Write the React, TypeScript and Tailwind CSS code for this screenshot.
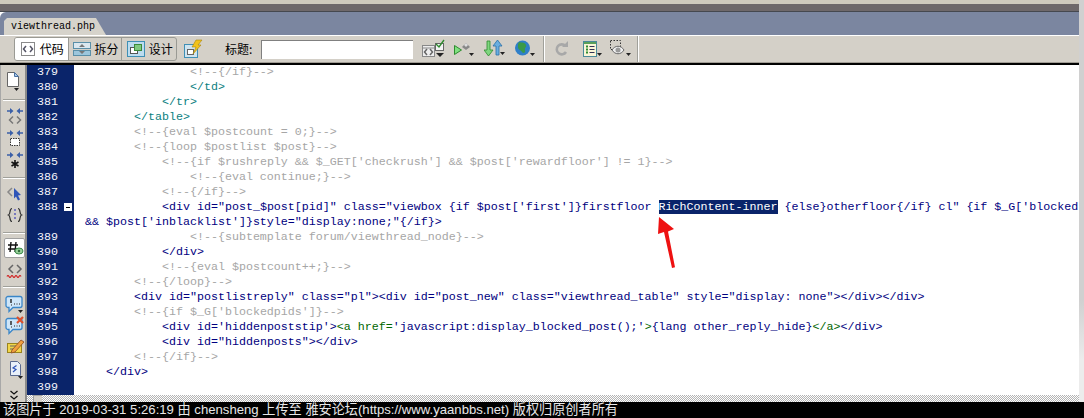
import React from 'react'

type Seg = [string, string?]

const NAVY = 'text-[#000080]'
const GRAY = 'text-[#a6a6a6]'
const TEAL = 'text-[#0a8080]'
const GREEN = 'text-[#006600]'

const lines: { num?: string; indent: number; segs: Seg[] }[] = [
    { num: '379', indent: 16, segs: [['<!--{/if}-->', GRAY]] },
    { num: '380', indent: 16, segs: [['</td>', TEAL]] },
    { num: '381', indent: 12, segs: [['</tr>', TEAL]] },
    { num: '382', indent: 8, segs: [['</table>', TEAL]] },
    { num: '383', indent: 8, segs: [['<!--{eval $postcount = 0;}-->', GRAY]] },
    { num: '384', indent: 8, segs: [['<!--{loop $postlist $post}-->', GRAY]] },
    { num: '385', indent: 12, segs: [["<!--{if $rushreply && $_GET['checkrush'] && $post['rewardfloor'] != 1}-->", GRAY]] },
    { num: '386', indent: 16, segs: [['<!--{eval continue;}-->', GRAY]] },
    { num: '387', indent: 12, segs: [['<!--{/if}-->', GRAY]] },
    {
        num: '388',
        indent: 12,
        segs: [
            ['<div id="post_$post[pid]" class="viewbox {if $post[\'first\']}firstfloor ', NAVY],
            ['RichContent-inner', 'bg-[#0a246a] text-white'],
            [" {else}otherfloor{/if} cl\" {if $_G['blocked", NAVY],
        ],
    },
    { indent: 1, segs: [["&& $post['inblacklist']}style=\"display:none;\"{/if}>", NAVY]] },
    { num: '389', indent: 16, segs: [['<!--{subtemplate forum/viewthread_node}-->', GRAY]] },
    { num: '390', indent: 12, segs: [['</div>', NAVY]] },
    { num: '391', indent: 12, segs: [['<!--{eval $postcount++;}-->', GRAY]] },
    { num: '392', indent: 8, segs: [['<!--{/loop}-->', GRAY]] },
    {
        num: '393',
        indent: 8,
        segs: [['<div id="postlistreply" class="pl"><div id="post_new" class="viewthread_table" style="display: none"></div></div>', NAVY]],
    },
    { num: '394', indent: 8, segs: [["<!--{if $_G['blockedpids']}-->", GRAY]] },
    {
        num: '395',
        indent: 12,
        segs: [
            ["<div id='hiddenpoststip'>", NAVY],
            ['<a href=', GREEN],
            ["'javascript:display_blocked_post();'", NAVY],
            ['>', GREEN],
            ['{lang other_reply_hide}', NAVY],
            ['</a>', GREEN],
            ['</div>', NAVY],
        ],
    },
    { num: '396', indent: 12, segs: [['<div id="hiddenposts"></div>', NAVY]] },
    { num: '397', indent: 8, segs: [['<!--{/if}-->', GRAY]] },
    { num: '398', indent: 4, segs: [['</div>', NAVY]] },
    { num: '399', indent: 0, segs: [] },
]

const Svg = ({ w = 18, h = 18, children }: { w?: number; h?: number; children: React.ReactNode }) => (
    <svg width={w} height={h} viewBox={`0 0 ${w} ${h}`} className="block shrink-0">
        {children}
    </svg>
)

const Caret = ({ x, y }: { x: number; y: number }) => <path d={`M${x} ${y}h5l-2.5 3z`} fill="#222" />

const CodeIcon = () => (
    <Svg>
        <rect x="2.5" y="2.5" width="13" height="13" fill="#fff" stroke="#8a8a8a" />
        <path d="M7 6 4.5 9 7 12M11 6l2.5 3L11 12" fill="none" stroke="#556" strokeWidth="1.5" />
    </Svg>
)

const SplitIcon = () => (
    <Svg w={20}>
        <rect x="1.5" y="2.5" width="17" height="6" fill="#dbe7ef" stroke="#5a8fa8" />
        <rect x="1.5" y="10.5" width="17" height="5" fill="#9cc6dc" stroke="#5a8fa8" />
        <path d="M7 7 10 4l3 3zM7 11l3 3 3-3z" fill="#777" />
    </Svg>
)

const DesignIcon = () => (
    <Svg w={20}>
        <rect x="1.5" y="1.5" width="17" height="15" fill="#bcdcef" stroke="#3f8fb5" />
        <rect x="4.5" y="7.5" width="7" height="6" fill="#fff" stroke="#555" />
        <rect x="8.5" y="4.5" width="7" height="6" fill="#7fc97f" stroke="#3a8a3a" />
    </Svg>
)

const FlashIcon = () => (
    <Svg w={20} h={20}>
        <rect x="1.5" y="5.5" width="13" height="13" fill="#cfe4f0" stroke="#3f8fb5" />
        <rect x="4.5" y="10.5" width="6" height="5" fill="#fff" stroke="#666" />
        <path d="M13 1h6l-4 5h3l-8 9 3-7H9z" fill="#f2c21a" stroke="#a8840c" strokeWidth=".6" />
    </Svg>
)

const ValidateIcon = () => (
    <Svg w={25} h={20}>
        <rect x="1.5" y="6.5" width="12" height="11" fill="#eee" stroke="#888" />
        <path d="M2 9h11" stroke="#888" />
        <path d="M6 10 3.5 13 6 16M9 10l2.5 3L9 16" fill="none" stroke="#666" strokeWidth="1.5" />
        <rect x="14.5" y="4.5" width="8" height="7" fill="#f4f4f4" stroke="#666" />
        <path d="m15 5 3 3 5-7" fill="none" stroke="#2e8b2e" strokeWidth="1.4" />
        <path d="M15 14h8l-4 4z" fill="#222" />
    </Svg>
)

const DebugIcon = () => (
    <Svg w={23} h={20}>
        <path d="M1.5 6.5v9l7-4.5z" fill="#7fe07f" stroke="#2e8b2e" />
        <path d="m9 8 4-4 4 4-4 3z" fill="#888" />
        <path d="m11 6 2-2 2 2-2 2z" fill="#ddd" />
        <Caret x={16} y={14} />
    </Svg>
)

const ArrowsIcon = () => (
    <Svg w={21} h={20}>
        <path d="M3 2h3v9h3l-4.5 6L0 11h3z" fill="#7fd67f" stroke="#2e8b2e" strokeWidth=".8" />
        <path d="M12 16V7H9l4.5-6L18 7h-3v9z" fill="#6aaee0" stroke="#2a6ea8" strokeWidth=".8" />
        <Caret x={16} y={13} />
    </Svg>
)

const GlobeIcon = () => (
    <Svg w={23} h={20}>
        <circle cx="8.5" cy="9" r="7.5" fill="#2f7fc8" />
        <path d="M5 3c3 1 6 0 7 3s-2 2-1 5-2 4-3 2-4-2-4-5 0-3 1-5z" fill="#3a9a4a" />
        <Caret x={16} y={14} />
    </Svg>
)

const RefreshIcon = () => (
    <Svg w={15} h={16}>
        <path d="M11.5 5A5 5 0 1 0 12 11" fill="none" stroke="#a8a8a8" strokeWidth="2.6" />
        <path d="M8 6h6V0z" fill="#a8a8a8" />
    </Svg>
)

const ListIcon = () => (
    <Svg w={20} h={20}>
        <rect x="1.5" y="2.5" width="13" height="15" fill="#fbf6d8" stroke="#4a8a9a" />
        <path d="M2 4h12" stroke="#5aa05a" strokeWidth="2" />
        <path d="M4 7.5h2M4 10.5h2M4 13.5h2" stroke="#2e8b2e" strokeWidth="2" />
        <path d="M7.5 7.5h5M7.5 10.5h5M7.5 13.5h5" stroke="#335" />
        <Caret x={15} y={14} />
    </Svg>
)

const EyeIcon = () => (
    <Svg w={24} h={20}>
        <rect x="1.5" y="1.5" width="10" height="9" fill="none" stroke="#333" strokeDasharray="1.5 1.5" />
        <path d="M3 11c3-5 9-5 12 0-3 5-9 5-12 0z" fill="#eee" stroke="#666" />
        <circle cx="9" cy="11" r="2.5" fill="#999" />
        <Caret x={17} y={14} />
    </Svg>
)

const SideDoc = () => (
    <Svg w={16} h={20}>
        <path d="M1.5 1.5h7l4 4v10h-11z" fill="#fff" stroke="#666" />
        <path d="M8.5 1.5v4h4z" fill="#a8c8e8" stroke="#4a70a0" />
        <Caret x={8} y={17} />
    </Svg>
)

const Collapse = ({ kind }: { kind: 'code' | 'box' | 'star' }) => (
    <Svg w={18} h={20}>
        <path d="M1 5h5M17 5h-5" stroke="#3a5fa8" strokeWidth="1.4" />
        <path d="m4 2 3.5 3L4 8zM14 2l-3.5 3L14 8z" fill="#3a5fa8" />
        {kind === 'code' && <path d="M7 10.5 3.5 14 7 17.5M11 10.5l3.5 3.5L11 17.5" fill="none" stroke="#777" strokeWidth="1.5" />}
        {kind === 'box' && <rect x="4.5" y="10.5" width="9" height="7" fill="#fff" stroke="#333" strokeDasharray="1.5 1" />}
        {kind === 'star' && <path d="M9 10v8M5.5 12l7 4M12.5 12l-7 4" stroke="#111" strokeWidth="1.6" />}
    </Svg>
)

const SelectTag = () => (
    <Svg>
        <path d="M6 4 2 8l4 4" fill="none" stroke="#888" strokeWidth="1.5" />
        <path d="m8 4 7 7-3 .5 2 4-2 1-2-4-2 2z" fill="#2f55b8" />
    </Svg>
)

const Braces = () => (
    <Svg>
        <path d="M6 2.5C3 2.5 5 8 2.5 9 5 10 3 15.5 6 15.5M12 2.5c3 0 1 5.5 3.5 6.5-2.5 1-.5 6.5-3.5 6.5" fill="none" stroke="#333" strokeWidth="1.2" />
        <path d="M9 3v12" stroke="#4a4ab8" strokeDasharray="2 2" strokeWidth="1.3" />
    </Svg>
)

const HashIcon = () => (
    <Svg>
        <path d="M5 3 4 13M10 3 9 13M2 6h10M2 10h10" stroke="#111" strokeWidth="1.4" />
        <ellipse cx="13" cy="12" rx="4" ry="3" fill="#9ad09a" stroke="#3a8a4a" />
        <circle cx="13" cy="12" r="1.2" fill="#2e6a3a" />
    </Svg>
)

const RedTag = () => (
    <Svg>
        <path d="M7 2 3 6l4 4M11 2l4 4-4 4" fill="none" stroke="#666" strokeWidth="1.5" />
        <path d="M1 13.5q1-2 2 0t2 0 2 0 2 0 2 0 2 0 2 0" fill="none" stroke="#d02020" strokeWidth="1.2" />
    </Svg>
)

const Balloon = ({ cross }: { cross?: boolean }) => (
    <Svg w={20} h={20}>
        <path d="M3 2.5h12a2 2 0 0 1 2 2v7a2 2 0 0 1-2 2H8l-4 4v-4H3a2 2 0 0 1-2-2v-7a2 2 0 0 1 2-2z" fill="#cfe6f8" stroke="#3a86c8" strokeWidth="1.3" />
        <path d="M6 5v4" stroke="#222" strokeWidth="1.4" />
        <path d="M9 10h1M11.5 10h1M14 10h1M6 11h1" stroke="#222" />
        {cross ? <path d="m12 1 6 6M18 1l-6 6" stroke="#e0502a" strokeWidth="2.2" /> : <Caret x={13} y={16} />}
    </Svg>
)

const Pencil = () => (
    <Svg w={20} h={18}>
        <rect x="1.5" y="6.5" width="14" height="9" fill="#f2d64a" stroke="#9a8420" />
        <path d="M4 9h6M4 12h4" stroke="#666" />
        <path d="m6 13 9-10 3 2-9 10-4 1z" fill="#f0a040" stroke="#8a4a20" strokeWidth=".8" />
    </Svg>
)

const ScriptDoc = () => (
    <Svg w={18} h={20}>
        <path d="M2.5 1.5h7l3 3v11h-10z" fill="#e8f0fa" stroke="#5a6a90" />
        <path d="M8.5 5.5 5 8l3 1.5L5 12" fill="none" stroke="#2f55b8" strokeWidth="1.2" />
        <Caret x={10} y={16} />
    </Svg>
)

const Chevrons = () => (
    <Svg w={10} h={10}>
        <path d="m1.5 1 3.5 3 3.5-3M1.5 6 5 9l3.5-3" fill="none" stroke="#111" strokeWidth="1.3" />
    </Svg>
)

const Sep = () => <div className="mx-auto h-px w-[22px] bg-[#a0a09a] shadow-[0_1px_0_#fff]" />

const ModeButton = ({ active, label, children }: { active?: boolean; label: string; children: React.ReactNode }) => (
    <div
        className={`flex h-full w-[54px] items-center justify-center gap-[3px] border-r border-[#9a9a94] last:border-r-0 ${
            active ? 'bg-white' : ''
        }`}
    >
        {children}
        <span className="text-[12px] text-black">{label}</span>
    </div>
)

export default function App() {
    return (
        <div className="flex h-[418px] w-[1084px] flex-col overflow-hidden bg-white font-['Noto_Sans_CJK_SC',sans-serif]">
            <div className="flex min-h-0 flex-1">
                <div className="flex w-[1079px] shrink-0 flex-col">
                    {/* window chrome */}
                    <div className="h-[4px] shrink-0 bg-[#cfcabd]" />
                    <div className="h-[7px] shrink-0 bg-[#6e686a]" />
                    <div className="h-px shrink-0 bg-[#45484f]" />
                    <div className="flex h-[23px] shrink-0 items-end rounded-tl-[6px] bg-[#7b86a0] pl-[4px]">
                        <div className="flex h-[17px] w-[102px] items-center bg-[#d6d3cb] pl-[7px] font-['Liberation_Mono',monospace] text-[10px] text-black [clip-path:polygon(0_100%,0_3px,3px_0,92px_0,100%_100%)]">
                            viewthread.php
                        </div>
                    </div>

                    {/* top toolbar */}
                    <div className="flex h-[27px] shrink-0 items-center border-t border-white bg-[#d4d0c8] pl-[5px]">
                        <div className="h-[20px] w-[4px] bg-[radial-gradient(#777_40%,transparent_45%)] bg-[length:2px_2px]" />
                        <div className="ml-[5px] flex h-[24px] w-[163px] overflow-hidden rounded-[3px] border border-[#9a9a94]">
                            <ModeButton active label="代码">
                                <CodeIcon />
                            </ModeButton>
                            <ModeButton label="拆分">
                                <SplitIcon />
                            </ModeButton>
                            <ModeButton label="设计">
                                <DesignIcon />
                            </ModeButton>
                        </div>
                        <div className="ml-[6px]">
                            <FlashIcon />
                        </div>
                        <span className="ml-[22px] w-[36px] text-[12px] text-black">标题:</span>
                        <div className="h-[19px] w-[152px] border-l border-t border-[#808080] bg-white" />
                        <div className="ml-[8px]">
                            <ValidateIcon />
                        </div>
                        <div className="ml-[7px]">
                            <DebugIcon />
                        </div>
                        <div className="ml-[8px]">
                            <ArrowsIcon />
                        </div>
                        <div className="ml-[9px]">
                            <GlobeIcon />
                        </div>
                        <div className="ml-[6px] h-[26px] w-px bg-[#a0a09a] shadow-[1px_0_0_#fff]" />
                        <div className="ml-[10px]">
                            <RefreshIcon />
                        </div>
                        <div className="ml-[13px]">
                            <ListIcon />
                        </div>
                        <div className="ml-[7px]">
                            <EyeIcon />
                        </div>
                        <div className="ml-[4px] h-[26px] w-px bg-[#a0a09a] shadow-[1px_0_0_#fff]" />
                    </div>
                    <div className="h-px shrink-0 bg-[#a09c94]" />
                    <div className="h-[2px] shrink-0 bg-black" />

                    {/* editor */}
                    <div className="relative flex min-h-0 flex-1">
                        <div className="flex w-[27px] shrink-0 flex-col border-l border-r-2 border-l-[#a8a8a8] border-r-[#8a8a8a] bg-[#d4d0c8] pl-[2px] pt-[6px]">
                            <div className="ml-[3px] flex h-[20px] items-center">
                                <SideDoc />
                            </div>
                            <div className="mt-[8px]">
                                <Sep />
                            </div>
                            <div className="mt-[6px] flex flex-col items-start gap-[2px] pl-[3px]">
                                <Collapse kind="code" />
                                <Collapse kind="box" />
                                <Collapse kind="star" />
                            </div>
                            <div className="mt-[7px]">
                                <Sep />
                            </div>
                            <div className="ml-[3px] mt-[6px] flex flex-col gap-[4px]">
                                <SelectTag />
                                <Braces />
                            </div>
                            <div className="mt-[8px]">
                                <Sep />
                            </div>
                            <div className="ml-[1px] mt-[5px] flex h-[20px] w-[21px] items-center justify-center rounded-[2px] border border-[#a0a0a0] bg-white">
                                <HashIcon />
                            </div>
                            <div className="ml-[3px] mt-[5px]">
                                <RedTag />
                            </div>
                            <div className="mt-[5px]">
                                <Sep />
                            </div>
                            <div className="ml-[2px] mt-[7px] flex flex-col gap-[2px]">
                                <Balloon />
                                <Balloon cross />
                            </div>
                            <div className="ml-[3px] mt-[1px]">
                                <Pencil />
                            </div>
                            <div className="ml-[5px] mt-[5px]">
                                <ScriptDoc />
                            </div>
                            <div className="ml-[6px] mt-[10px]">
                                <Chevrons />
                            </div>
                        </div>

                        <div className="flex min-w-0 flex-1 flex-col">
                            <div className="flex min-h-0 flex-1 flex-col font-['Liberation_Mono',monospace] text-[11.67px] leading-[15px]">
                                {lines.map((line, i) => (
                                    <div key={i} className="flex h-[15px] shrink-0">
                                        <div className="relative h-[15px] w-[47px] shrink-0 bg-[#0a246a] pl-[10px] text-[#f4f6fb]">
                                            {line.num}
                                            {line.num === '388' && (
                                                <div className="absolute left-[37px] top-[3px] flex h-[8px] w-[8px] items-center justify-center bg-white">
                                                    <div className="h-px w-[4px] bg-black" />
                                                </div>
                                            )}
                                        </div>
                                        <div className="flex-1 whitespace-pre pl-[4px]">
                                            {' '.repeat(line.indent)}
                                            {line.segs.map(([text, cls], j) => (
                                                <span key={j} className={cls}>
                                                    {text}
                                                </span>
                                            ))}
                                        </div>
                                    </div>
                                ))}
                            </div>
                            <div className="h-[7px] shrink-0 bg-[repeating-conic-gradient(#b4b4b4_0_25%,#fff_0_50%)] bg-[length:2px_2px]">
                                <div className="ml-[6px] h-full w-[9px] border-l border-t border-[#a0a0a0] bg-[#d4d0c8]" />
                            </div>
                        </div>

                        {/* red arrow pasted on the screenshot */}
                        <svg width="24" height="56" viewBox="0 0 24 56" className="absolute left-[655px] top-[150px]">
                            <path d="M4 2 3 19l6-2 8 36 3-.7L13 16.5l6-2.5z" fill="#ee1111" />
                        </svg>
                    </div>
                </div>
                <div className="w-[5px] shrink-0 bg-[linear-gradient(#d0d0d0_0,#d0d0d0_300px,#ececec_360px)]" />
            </div>

            {/* watermark bar */}
            <div className="flex h-[16px] shrink-0 items-center bg-black pl-[3px] font-['Liberation_Sans','Noto_Sans_CJK_SC',sans-serif] text-[13.15px] leading-[16px] text-[#e8e8e8]">
                该图片于 2019-03-31 5:26:19 由 chensheng 上传至 雅安论坛(https://www.yaanbbs.net) 版权归原创者所有
            </div>
        </div>
    )
}
